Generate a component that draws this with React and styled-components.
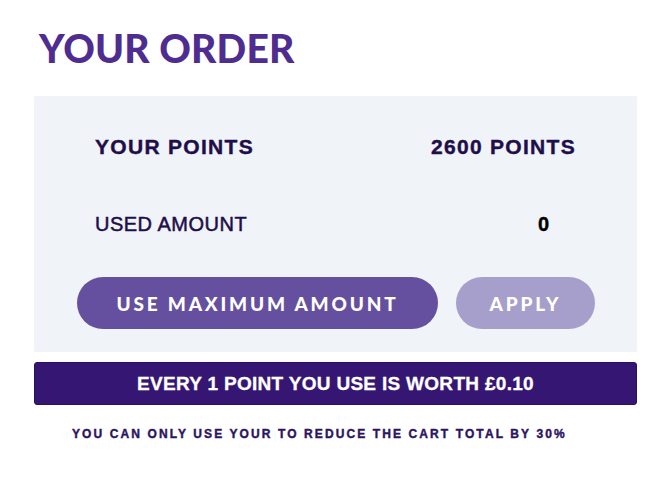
import React from "react";
import styled, { createGlobalStyle } from "styled-components";

const Global = createGlobalStyle`
  html, body { margin: 0; padding: 0; background: #ffffff; }
  body { font-family: "Liberation Sans", Arial, sans-serif; }
`;

const Page = styled.div`
  width: 603px;
  padding: 26px 0 0 34px;
  display: flex;
  flex-direction: column;
`;

const Title = styled.h1`
  margin: 0 0 0 5px;
  font-family: Lato, "Liberation Sans", sans-serif;
  font-weight: 900;
  font-size: 39px;
  line-height: 44px;
  letter-spacing: 0.2px;
  color: #4f2c90;
  height: 70px;
`;

const Panel = styled.section`
  background: #f0f3f8;
  border-radius: 2px;
  padding: 36px 0 23px 0;
  display: flex;
  flex-direction: column;
`;

const Row = styled.div`
  display: flex;
  justify-content: space-between;
  align-items: center;
  padding: 0 61px;
  height: 30px;
  margin-top: ${(p) => p.$top || 0}px;
`;

const Label = styled.span`
  font-family: "Liberation Sans", Arial, sans-serif;
  font-size: ${(p) => (p.$strong ? 21 : 20)}px;
  font-weight: ${(p) => (p.$strong ? 700 : 400)};
  letter-spacing: ${(p) => (p.$strong ? 1.3 : 0.5)}px;
  -webkit-text-stroke: ${(p) => (p.$strong ? "0.4px" : "0.5px")} #1e0e4a;
  color: #1e0e4a;
`;

const Value = styled.span`
  font-family: "Liberation Sans", Arial, sans-serif;
  font-size: ${(p) => (p.$spaced ? 21 : 20)}px;
  font-weight: 700;
  letter-spacing: ${(p) => (p.$spaced ? 1.3 : 0)}px;
  -webkit-text-stroke: 0.4px ${(p) => p.$color};
  color: ${(p) => p.$color};
  margin-right: ${(p) => p.$inset || 0}px;
`;

const Actions = styled.div`
  display: flex;
  gap: 18px;
  padding: 0 0 0 43px;
  margin-top: 38px;
`;

const Pill = styled.button`
  height: 52px;
  width: ${(p) => p.$w}px;
  border: none;
  border-radius: 26px;
  background: ${(p) => p.$bg};
  color: #ffffff;
  font-family: Lato, "Liberation Sans", sans-serif;
  font-weight: 900;
  font-size: 19px;
  letter-spacing: 2.8px;
  padding: 0;
  cursor: pointer;
`;

const Banner = styled.div`
  margin-top: 10px;
  height: 43px;
  background: #351773;
  border: 1px solid #2a105f;
  border-radius: 3px;
  box-sizing: border-box;
  display: flex;
  align-items: center;
  justify-content: center;
  color: #ffffff;
  font-family: "Liberation Sans", Arial, sans-serif;
  font-weight: 700;
  font-size: 19px;
  letter-spacing: 0.3px;
  -webkit-text-stroke: 0.3px #ffffff;
`;

const Note = styled.p`
  margin: 22px 0 0 38px;
  font-family: "Liberation Sans", Arial, sans-serif;
  font-weight: 700;
  font-size: 12px;
  letter-spacing: 2.1px;
  color: #2b1460;
  -webkit-text-stroke: 0.4px #2b1460;
`;

export default function App() {
  return (
    <>
      <Global />
      <Page>
        <Title>YOUR ORDER</Title>
        <Panel>
          <Row>
            <Label $strong>YOUR POINTS</Label>
            <Value $spaced $color="#1e0e4a">2600 POINTS</Value>
          </Row>
          <Row $top={47}>
            <Label>USED AMOUNT</Label>
            <Value $color="#000000" $inset={27}>0</Value>
          </Row>
          <Actions>
            <Pill $w={361} $bg="#65509f">USE MAXIMUM AMOUNT</Pill>
            <Pill $w={139} $bg="#a69fcb">APPLY</Pill>
          </Actions>
        </Panel>
        <Banner>EVERY 1 POINT YOU USE IS WORTH £0.10</Banner>
        <Note>YOU CAN ONLY USE YOUR TO REDUCE THE CART TOTAL BY 30%</Note>
      </Page>
    </>
  );
}
